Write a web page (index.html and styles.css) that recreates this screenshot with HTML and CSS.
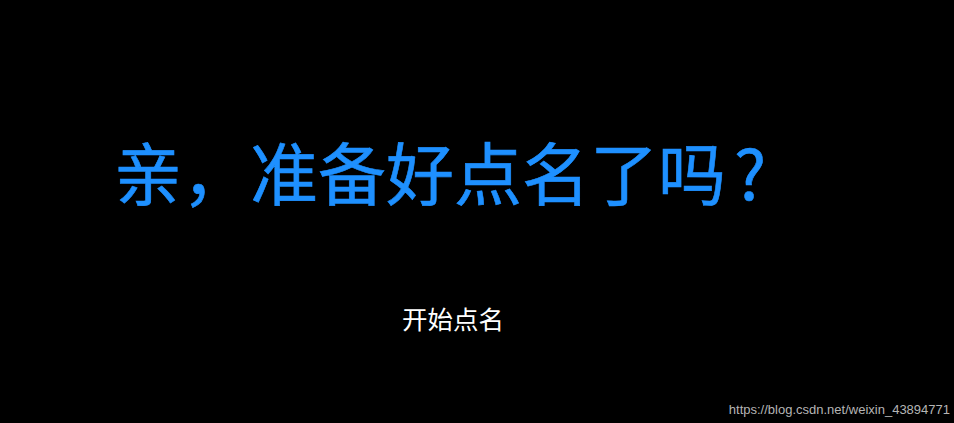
FILE: index.html
```html
<!DOCTYPE html>
<html lang="zh-CN">
<head>
<meta charset="utf-8">
<title>点名</title>
<link rel="stylesheet" href="styles.css">
</head>
<body>
<div class="page">
  <h1 class="title">亲，准备好点名了吗<span class="qmark">?</span></h1>
  <div class="start">开始点名</div>
</div>
<div class="watermark">https://blog.csdn.net/weixin_43894771</div>
</body>
</html>
```
FILE: styles.css
```css
html, body {
  margin: 0;
  padding: 0;
  background: #000;
  height: 100%;
}
body {
  font-family: "Noto Sans CJK SC", "Noto Sans", sans-serif;
  overflow: hidden;
  position: relative;
}
.page {
  display: flex;
  flex-direction: column;
  padding-top: 137px;
}
.title {
  margin: 0 0 0 114px;
  font-size: 68px;
  font-weight: 400;
  line-height: 1;
  color: #1e90ff;
  -webkit-text-stroke: 0.6px #1e90ff;
}
.qmark {
  margin-left: 8px;
}
.start {
  margin: 100px 0 0 402px;
  font-size: 25.5px;
  line-height: 1;
  color: #fff;
}
.watermark {
  position: absolute;
  right: 4px;
  bottom: 6px;
  font-family: "Liberation Sans", Arial, sans-serif;
  font-size: 13px;
  color: #b5b5b5;
}
```
